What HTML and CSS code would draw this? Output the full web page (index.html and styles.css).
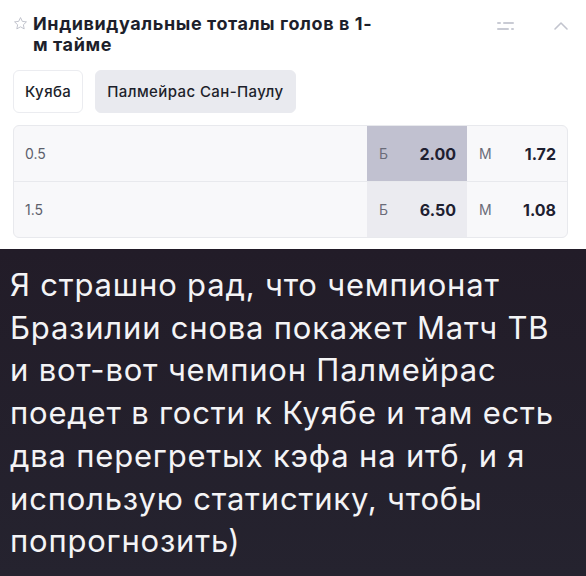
FILE: index.html
```html
<!DOCTYPE html>
<html lang="ru">
  <head>
    <meta charset="UTF-8" />
    <meta name="viewport" content="width=device-width, initial-scale=1.0" />
    <title>Индивидуальные тоталы</title>
    <link rel="stylesheet" href="styles.css">
  </head>
  <body>
    <section class="market">
      <div class="market-head">
        <svg class="star" width="15" height="15" viewBox="0 0 24 24">
          <path d="M12 2.5l2.9 6.1 6.6.8-4.9 4.6 1.3 6.6L12 17.3l-5.9 3.3 1.3-6.6-4.9-4.6 6.6-.8z" fill="none" stroke="#b9bbc6" stroke-width="1.4" stroke-linejoin="round" />
        </svg>
        <h2 class="market-title">Индивидуальные тоталы голов в 1-<br>м тайме</h2>
        <div class="head-icons">
          <svg width="18" height="10" viewBox="0 0 18 10">
            <rect x="0" y="1" width="4" height="2" rx="1" fill="#c9cbd4" />
            <rect x="6" y="1" width="11" height="2" rx="1" fill="#c9cbd4" />
            <rect x="0" y="7" width="12" height="2" rx="1" fill="#c9cbd4" />
            <rect x="14" y="7" width="3" height="2" rx="1" fill="#c9cbd4" />
          </svg>
          <svg width="16" height="10" viewBox="0 0 16 10">
            <path d="M2 8l6-6 6 6" fill="none" stroke="#c2c4ce" stroke-width="1.6" stroke-linecap="round" stroke-linejoin="round" />
          </svg>
        </div>
      </div>

      <div class="tabs">
        <button class="tab">Куяба</button>
        <button class="tab tab-active">Палмейрас Сан-Паулу</button>
      </div>

      <div class="odds-table">
        <div class="odds-row">
          <span class="line">0.5</span>
          <div class="odd odd-selected">
            <span class="odd-label">Б</span>
            <span class="odd-value">2.00</span>
          </div>
          <div class="odd">
            <span class="odd-label">М</span>
            <span class="odd-value">1.72</span>
          </div>
        </div>
        <div class="odds-row">
          <span class="line">1.5</span>
          <div class="odd odd-hover">
            <span class="odd-label">Б</span>
            <span class="odd-value">6.50</span>
          </div>
          <div class="odd">
            <span class="odd-label">М</span>
            <span class="odd-value">1.08</span>
          </div>
        </div>
      </div>
    </section>

    <section class="caption">
      <p>
        Я страшно рад, что чемпионат<br>
        Бразилии снова покажет Матч ТВ<br>
        и вот-вот чемпион Палмейрас<br>
        поедет в гости к Куябе и там есть<br>
        два перегретых кэфа на итб, и я<br>
        использую статистику, чтобы<br>
        попрогнозить)
      </p>
    </section>
  </body>
</html>
```

FILE: styles.css
```css
body {
  margin: 0;
  font-family: "Inter", "Noto Sans", sans-serif;
  background: #ffffff;
  color: #1d1f2b;
}
.market {
  padding: 13px 17px 11px 13px;
}
.market-head {
  display: flex;
  align-items: flex-start;
}
.star {
  margin: 3px 5px 0 0;
  flex-shrink: 0;
}
.market-title {
  margin: 0;
  font-size: 18px;
  line-height: 21px;
  letter-spacing: 0.6px;
  font-weight: 700;
  flex: 1;
}
.head-icons {
  display: flex;
  align-items: center;
  gap: 38px;
  margin-top: 8px;
}
.tabs {
  display: flex;
  gap: 12px;
  margin-top: 15px;
}
.tab {
  height: 43px;
  padding: 0 11px;
  border: 1px solid #ebecf0;
  border-radius: 6px;
  background: #ffffff;
  font-family: inherit;
  font-size: 15px;
  font-weight: 500;
  letter-spacing: 0.4px;
  color: #1d1f2b;
  cursor: pointer;
}
.tab-active {
  background: #e9eaef;
  border-color: #e9eaef;
}
.odds-table {
  margin-top: 12px;
  width: 553px;
  border: 1px solid #e8e9ed;
  border-radius: 6px;
  background: #f8f8fa;
  overflow: hidden;
}
.odds-row {
  display: flex;
  height: 55px;
}
.odds-row + .odds-row {
  border-top: 1px solid #e8e9ed;
}
.line {
  flex: 1;
  display: flex;
  align-items: center;
  padding-left: 11px;
  font-size: 14px;
  color: #5d5f6c;
}
.odd {
  width: 100px;
  display: flex;
  align-items: center;
  justify-content: space-between;
  padding: 0 11px 0 12px;
  box-sizing: border-box;
}
.odd-selected {
  background: #c1c1d0;
}
.odd-hover {
  background: #ebebf0;
}
.odd-label {
  font-size: 14px;
  color: #6a6c79;
}
.odd-value {
  font-size: 16px;
  font-weight: 700;
  color: #1e2030;
}
.caption {
  height: 328px;
  box-sizing: border-box;
  padding: 15px 10px 0;
  background: linear-gradient(180deg, #221c28, #25232f);
  color: #f4f4f6;
}
.caption p {
  margin: 0;
  font-size: 31px;
  line-height: 42.7px;
  letter-spacing: 0.8px;
  white-space: nowrap;
}
```
